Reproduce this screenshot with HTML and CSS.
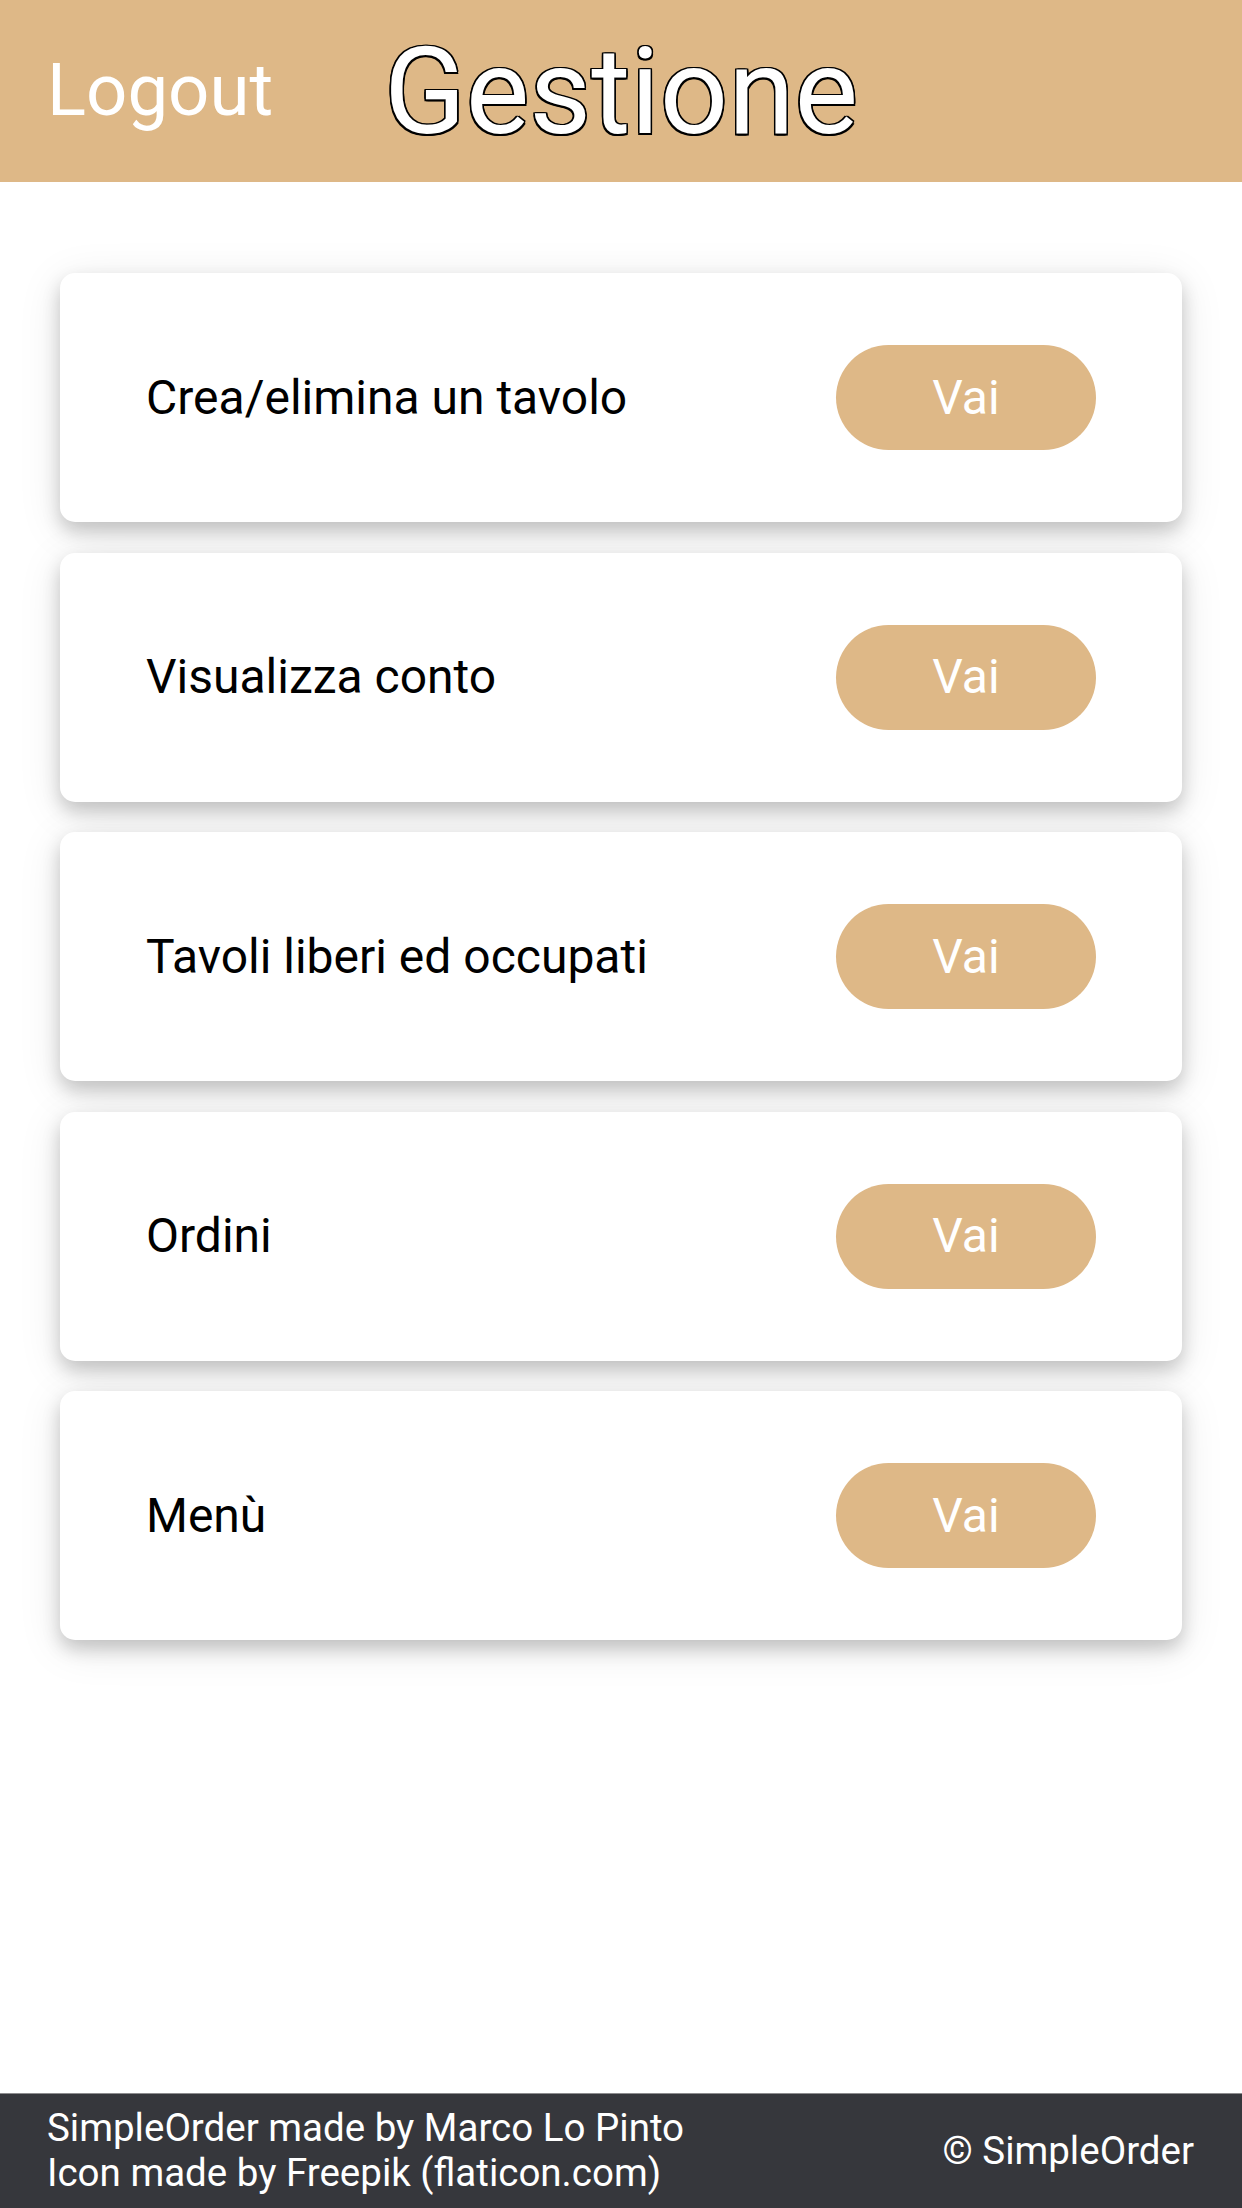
FILE: index.html
```html
<!DOCTYPE html>
<html lang="it">
<head>
<meta charset="utf-8">
<title>Gestione</title>
<link rel="stylesheet" href="styles.css">
</head>
<body>
<div class="page">
  <header class="topbar">
    <a class="logout">Logout</a>
    <h1 class="title">Gestione</h1>
    <span class="spacer"></span>
  </header>
  <main class="list">
    <div class="card"><span class="label">Crea/elimina un tavolo</span><button class="go">Vai</button></div>
    <div class="card"><span class="label">Visualizza conto</span><button class="go">Vai</button></div>
    <div class="card"><span class="label">Tavoli liberi ed occupati</span><button class="go">Vai</button></div>
    <div class="card"><span class="label">Ordini</span><button class="go">Vai</button></div>
    <div class="card"><span class="label">Menù</span><button class="go">Vai</button></div>
  </main>
  <footer class="footer">
    <div class="credits">
      <div>SimpleOrder made by Marco Lo Pinto</div>
      <div>Icon made by Freepik (flaticon.com)</div>
    </div>
    <div class="copy">© SimpleOrder</div>
  </footer>
</div>
</body>
</html>
```
FILE: styles.css
```css
html, body {
  margin: 0;
  padding: 0;
  background: #ffffff;
}
body {
  font-family: Roboto, "Liberation Sans", Arial, sans-serif;
}
.page {
  min-height: 2208px;
  display: flex;
  flex-direction: column;
}
.topbar {
  height: 182px;
  background: #deb887;
  display: grid;
  grid-template-columns: 1fr auto 1fr;
  align-items: start;
}
.logout {
  justify-self: start;
  margin: 55px 0 0 47px;
  font-size: 72.5px;
  line-height: 1;
  color: #ffffff;
}
.title {
  margin: 32px 0 0 0;
  font-size: 120px;
  line-height: 1;
  font-weight: 400;
  color: #ffffff;
  text-shadow:
    -1.5px -1.5px 0 #000, 1.5px -1.5px 0 #000,
    -1.5px 1.5px 0 #000, 1.5px 1.5px 0 #000,
    0 -1.5px 0 #000, 0 1.5px 0 #000,
    -1.5px 0 0 #000, 1.5px 0 0 #000;
}
.list {
  flex: 1;
  display: flex;
  flex-direction: column;
  gap: 30.5px;
  padding: 91px 60px 0 60px;
}
.card {
  height: 249px;
  box-sizing: border-box;
  background: #ffffff;
  border-radius: 15px;
  box-shadow: 0 9px 18px rgba(0, 0, 0, 0.19), 0 8px 44px rgba(0, 0, 0, 0.1);
  display: flex;
  align-items: center;
  justify-content: space-between;
  padding: 0 86px;
}
.label {
  font-size: 48px;
  line-height: 1;
  color: #000000;
}
.go {
  width: 260px;
  height: 105px;
  border: none;
  border-radius: 53px;
  background: #deb887;
  color: #ffffff;
  font-family: Roboto, "Liberation Sans", Arial, sans-serif;
  font-size: 48px;
  line-height: 1;
  padding: 0;
}
.footer {
  height: 115px;
  box-sizing: border-box;
  background: #36373c;
  border-top: 1px solid #8c8c8e;
  display: flex;
  align-items: center;
  justify-content: space-between;
  padding: 0 48px 0 47px;
  color: #ffffff;
  font-size: 38.5px;
  line-height: 1.16;
}
```
